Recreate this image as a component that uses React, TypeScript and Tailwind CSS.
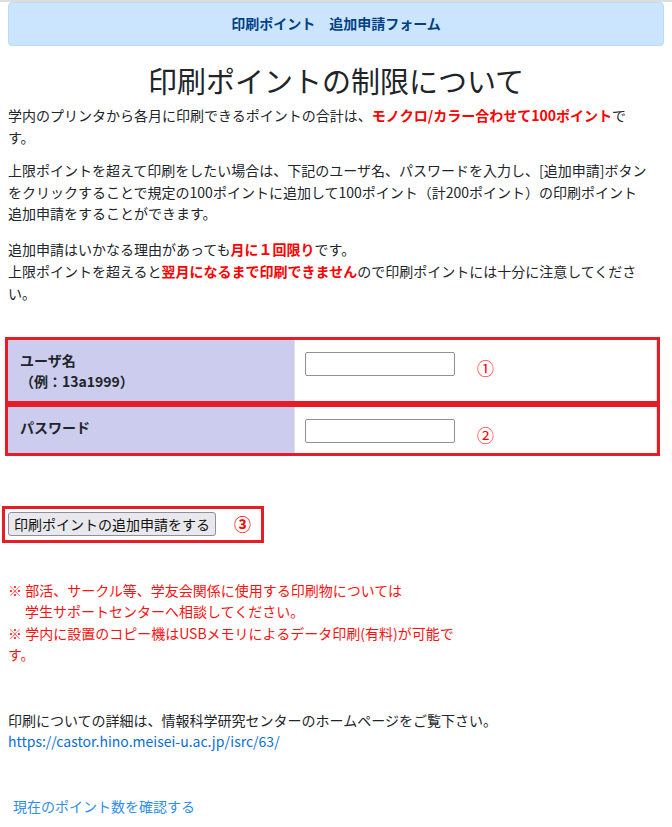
import { useState } from "react";

const font = { fontFamily: '"Noto Sans CJK JP", "Noto Sans", sans-serif' };

function FormRow({
  label,
  sub,
  num,
  type,
  value,
  onChange,
  tall,
}: {
  label: string;
  sub?: string;
  num: string;
  type: string;
  value: string;
  onChange: (v: string) => void;
  tall?: boolean;
}) {
  return (
    <div className="border-[3px] border-[#e81c24]">
      <div className={`flex ${tall ? "h-[61px]" : "h-[46px]"}`}>
        <div className="w-[287px] shrink-0 bg-[#ccccee] pl-3 pt-[10px] border-r border-[#dee2e6] font-bold text-[14px] leading-[21px] text-[#212529]">
          <div>{label}</div>
          {sub && <div>{sub}</div>}
        </div>
        <div className="flex-1 flex items-start pl-[10px] pt-[12px] border-r border-[#dee2e6]">
          <input
            type={type}
            value={value}
            onChange={(e) => onChange(e.target.value)}
            className="w-[150px] h-[24px] border border-[#8f8f9d] rounded-[2px] bg-white px-1 text-[14px] outline-none"
          />
          <span className="ml-[22px] mt-[6px] text-[17px] leading-[20px] text-[#ff0000]">{num}</span>
        </div>
      </div>
    </div>
  );
}

export default function App() {
  const [user, setUser] = useState("");
  const [pass, setPass] = useState("");

  return (
    <div style={font} className="min-h-[827px] bg-white text-[#212529] text-[14px] leading-[21.5px]">
      <div className="h-[2px] bg-[#dddddd]" />
      <div className="px-2">
        <div className="h-[44px] flex items-center justify-center bg-[#cce5ff] border border-[#b8daff] rounded text-[#004085] font-bold text-[14px]">
          印刷ポイント　追加申請フォーム
        </div>

        <h1 className="mt-[17px] text-center text-[29px] leading-[34px] font-normal text-[#212529]">
          印刷ポイントの制限について
        </h1>

        <p className="mt-[8px] mb-[12px]">
          学内のプリンタから各月に印刷できるポイントの合計は、
          <span className="font-bold text-[#ff0000]">モノクロ/カラー合わせて100ポイント</span>
          で
          <br />
          す。
        </p>
        <p className="mb-[13px]">
          上限ポイントを超えて印刷をしたい場合は、下記のユーザ名、パスワードを入力し、[追加申請]ボタン
          <br />
          をクリックすることで規定の100ポイントに追加して100ポイント（計200ポイント）の印刷ポイント
          <br />
          追加申請をすることができます。
        </p>
        <p className="leading-[22px]">
          追加申請はいかなる理由があっても
          <span className="font-bold text-[#ff0000]">月に１回限り</span>
          です。
          <br />
          上限ポイントを超えると
          <span className="font-bold text-[#ff0000]">翌月になるまで印刷できません</span>
          ので印刷ポイントには十分に注意してくださ
          <br />
          い。
        </p>
      </div>

      <div className="mt-[33px] px-[5px] w-[665px]">
        <FormRow label="ユーザ名" sub="（例：13a1999）" num="①" type="text" value={user} onChange={setUser} tall />
        <FormRow label="パスワード" num="②" type="password" value={pass} onChange={setPass} />
      </div>

      <div className="mt-[50px] ml-[2px] w-[262px] h-[37px] border-[3px] border-[#e81c24] flex items-center pl-[3px]">
        <button className="h-[24px] px-[5px] bg-[#e9e9ed] border border-[#8f8f9d] rounded-[3px] text-[14px] leading-[20px] text-[#111]">
          印刷ポイントの追加申請をする
        </button>
        <span className="ml-[18px] text-[17px] font-bold text-[#ff0000]">③</span>
      </div>

      <div className="px-2 mt-[37px] w-[470px] text-[#ff1111]">
        <div>※ 部活、サークル等、学友会関係に使用する印刷物については</div>
        <div className="pl-[17px]">学生サポートセンターへ相談してください。</div>
        <div>
          ※ 学内に設置のコピー機はUSBメモリによるデータ印刷(有料)が可能で
          <br />
          す。
        </div>
      </div>

      <div className="px-2 mt-[44px]">
        <div>印刷についての詳細は、情報科学研究センターのホームページをご覧下さい。</div>
        <a href="#" className="text-[#0a6fd8]">
          https://castor.hino.meisei-u.ac.jp/isrc/63/
        </a>
      </div>

      <div className="px-[13px] mt-[43px]">
        <a href="#" className="text-[#2f8ef0]">
          現在のポイント数を確認する
        </a>
      </div>
    </div>
  );
}
